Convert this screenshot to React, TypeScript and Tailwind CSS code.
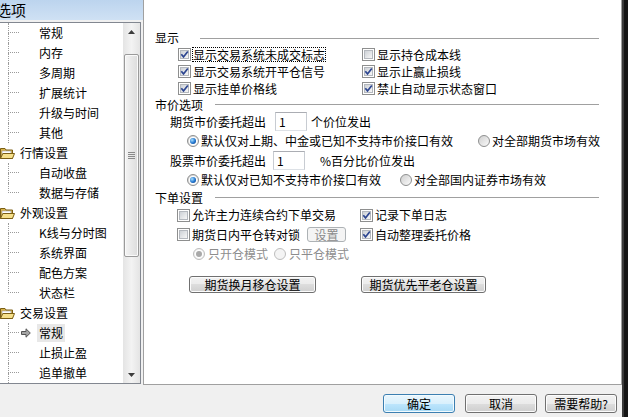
import React from 'react';

type TreeItem = { label: string; kind: 'child' | 'folder'; last?: boolean; selected?: boolean };

const tree: TreeItem[] = [
  { label: '常规', kind: 'child' },
  { label: '内存', kind: 'child' },
  { label: '多周期', kind: 'child' },
  { label: '扩展统计', kind: 'child' },
  { label: '升级与时间', kind: 'child' },
  { label: '其他', kind: 'child' },
  { label: '行情设置', kind: 'folder' },
  { label: '自动收盘', kind: 'child' },
  { label: '数据与存储', kind: 'child', last: true },
  { label: '外观设置', kind: 'folder' },
  { label: 'K线与分时图', kind: 'child' },
  { label: '系统界面', kind: 'child' },
  { label: '配色方案', kind: 'child' },
  { label: '状态栏', kind: 'child', last: true },
  { label: '交易设置', kind: 'folder' },
  { label: '常规', kind: 'child', selected: true },
  { label: '止损止盈', kind: 'child' },
  { label: '追单撤单', kind: 'child' },
];

function FolderIcon() {
  return (
    <svg width="15" height="13" viewBox="0 0 15 13" className="shrink-0">
      <path d="M0.5 1.5 H5 L6 3 H12.5 V11.5 H0.5 Z" fill="#d9b44a" stroke="#7a5e14" />
      <rect x="2" y="4" width="9" height="5" fill="#ffffff" stroke="#9a9a9a" strokeWidth="0.6" />
      <path d="M0.5 11.5 L2.8 6.5 H14.5 L12.5 11.5 Z" fill="#f6e08a" stroke="#7a5e14" />
    </svg>
  );
}

function ArrowIcon() {
  return (
    <svg width="10" height="10" viewBox="0 0 10 10" className="ml-[2px]">
      <path d="M0.5 3.5 H5 V0.8 L9.3 5 L5 9.2 V6.5 H0.5 Z" fill="#a5a5a5" stroke="#555555" strokeWidth="1" />
    </svg>
  );
}

function TreeRow({ item }: { item: TreeItem }) {
  if (item.kind === 'folder') {
    return (
      <div className="h-[20px] flex items-center">
        <FolderIcon />
        <span className="ml-[5px] leading-[14px] whitespace-nowrap">{item.label}</span>
      </div>
    );
  }
  return (
    <div className="h-[20px] flex items-stretch">
      <div className="ml-[8px] w-[11px] flex flex-col shrink-0">
        <div className="h-[10px] border-l border-b border-dotted border-[#9a9a9a]" />
        <div className={item.last ? 'flex-1' : 'flex-1 border-l border-dotted border-[#9a9a9a]'} />
      </div>
      <div className="w-[18px] flex items-center shrink-0">{item.selected && <ArrowIcon />}</div>
      <div className="flex items-center">
        <span
          className={
            item.selected
              ? 'px-[2px] h-[18px] leading-[18px] whitespace-nowrap bg-[#e8e8e8]'
              : 'px-[2px] h-[18px] leading-[18px] whitespace-nowrap'
          }
        >
          {item.label}
        </span>
      </div>
    </div>
  );
}

function ScrollArrow({ up }: { up?: boolean }) {
  return (
    <div className="h-[17px] flex items-center justify-center shrink-0">
      <svg width="7" height="4" viewBox="0 0 7 4">
        {up ? <path d="M0 4 L3.5 0 L7 4 Z" fill="#3c3c3c" /> : <path d="M0 0 L3.5 4 L7 0 Z" fill="#3c3c3c" />}
      </svg>
    </div>
  );
}

function Scrollbar() {
  return (
    <div className="w-[17px] h-full flex flex-col bg-gradient-to-r from-[#e4e4e4] via-[#f3f3f3] to-[#e4e4e4] shrink-0">
      <ScrollArrow up />
      <div className="h-[14px] shrink-0" />
      <div className="h-[203px] mx-[1px] rounded-[2px] border border-[#9a9a9a] bg-gradient-to-r from-[#f4f4f4] to-[#dcdcdc] shadow-[inset_0_0_0_1px_#fafafa] flex flex-col items-center justify-center gap-[1px] shrink-0">
        <div className="w-[7px] h-px bg-[#8a8a8a]" />
        <div className="w-[7px] h-px bg-[#8a8a8a]" />
        <div className="w-[7px] h-px bg-[#8a8a8a]" />
        <div className="w-[7px] h-px bg-[#8a8a8a]" />
      </div>
      <div className="flex-1" />
      <ScrollArrow />
    </div>
  );
}

function CheckBox({ checked }: { checked?: boolean }) {
  return (
    <span className="relative inline-block w-[13px] h-[13px] shrink-0 border border-[#8e8f8f] bg-white">
      <span className="absolute left-[1px] top-[1px] w-[9px] h-[9px] border border-[#b4b8be] bg-gradient-to-br from-[#cdd1d6] to-[#f7f7f7]" />
      {checked && (
        <svg className="absolute left-[1px] top-[1px]" width="9" height="9" viewBox="0 0 9 9">
          <path d="M1.3 4.3 L3.5 6.9 L7.8 1.4" fill="none" stroke="#2c4590" strokeWidth="1.7" />
        </svg>
      )}
    </span>
  );
}

function RadioBtn({ checked, disabled }: { checked?: boolean; disabled?: boolean }) {
  return (
    <span
      className={
        disabled
          ? 'inline-flex w-[12px] h-[12px] shrink-0 items-center justify-center rounded-full border border-[#bdbdbd] bg-[#f4f4f4]'
          : 'inline-flex w-[12px] h-[12px] shrink-0 items-center justify-center rounded-full border border-[#8e8f8f] bg-gradient-to-br from-[#cfcfcf] to-[#fbfbfb]'
      }
    >
      {checked &&
        (disabled ? (
          <span className="w-[6px] h-[6px] rounded-full bg-[#a9a9a9] shadow-[0_0_0_1px_#ffffff]" />
        ) : (
          <span className="w-[6px] h-[6px] rounded-full shadow-[0_0_0_1px_#ffffff] bg-[radial-gradient(circle_at_35%_35%,#a8e0ff_0%,#1f74cf_55%,#0a3a7e_100%)]" />
        ))}
    </span>
  );
}

function WinButton({
  children,
  className,
  variant,
}: {
  children: React.ReactNode;
  className: string;
  variant?: 'primary' | 'disabled';
}) {
  const look =
    variant === 'primary'
      ? 'border-[#3c7fb1] bg-[linear-gradient(#eaf6fd_0%,#d9f0fc_50%,#bee6fd_50%,#a7d9f5_100%)] shadow-[inset_0_0_0_1px_#f2fbff]'
      : variant === 'disabled'
        ? 'border-[#adb2b5] bg-[#f4f4f4] text-[#8a8a8a]'
        : 'border-[#707070] bg-[linear-gradient(#f2f2f2_0%,#ebebeb_50%,#dddddd_50%,#cfcfcf_100%)] shadow-[inset_0_0_0_1px_#fcfcfc]';
  return (
    <div className={`flex items-center justify-center rounded-[3px] border shrink-0 whitespace-nowrap leading-none ${look} ${className}`}>
      {children}
    </div>
  );
}

function Header({ title, gap }: { title: string; gap: string }) {
  return (
    <div className="flex items-center shrink-0 h-[16px]">
      <span className="leading-[14px] whitespace-nowrap">{title}</span>
      <div className={`flex-1 h-px bg-[#a0a0a0] mr-[22px] ${gap}`} />
    </div>
  );
}

function TextBox({ value, className }: { value: string; className: string }) {
  return (
    <div className={`h-[19px] border border-[#abadb3] border-l-[#c8ccd2] border-r-[#c8ccd2] border-b-[#dde1e6] bg-white flex items-center pl-[3px] shrink-0 ${className}`}>
      {value}
    </div>
  );
}

export default function App() {
  return (
    <div className="w-[628px] h-[417px] overflow-hidden bg-[#f0f0f0] flex text-[12px] text-black font-['Noto_Sans_CJK_SC',sans-serif]">
      {/* Left column */}
      <div className="w-[143px] h-full flex flex-col shrink-0">
        <div className="h-[20px] bg-gradient-to-b from-[#bcd4ee] to-[#cfe1f4] flex items-center overflow-hidden">
          <span className="-ml-[4px] text-[15px] leading-[20px] whitespace-nowrap">选项</span>
        </div>
        <div className="mt-[2px] w-[141px] h-[362px] border-t border-r border-b border-[#828790] bg-white flex">
          <div className="w-[123px] flex flex-col overflow-hidden">
            {tree.map((it, i) => (
              <TreeRow key={i} item={it} />
            ))}
          </div>
          <Scrollbar />
        </div>
      </div>

      {/* Middle column */}
      <div className="w-[479px] h-full flex flex-col shrink-0">
        <div className="h-[385px] bg-white border-l border-r border-b border-[#a0a0a0] flex flex-col pl-[11px] pt-[30px] shrink-0">
          <Header title="显示" gap="ml-[21px]" />
          <div className="flex flex-col pl-[23px]">
            <div className="h-[17px] flex items-center">
              <div className="w-[184px] flex items-center shrink-0">
                <CheckBox checked />
                <span className="ml-[2px] leading-[13px] whitespace-nowrap outline outline-1 outline-dotted outline-[#000000]">显示交易系统未成交标志</span>
              </div>
              <CheckBox />
              <span className="ml-[2px] whitespace-nowrap">显示持仓成本线</span>
            </div>
            <div className="h-[17px] flex items-center">
              <div className="w-[184px] flex items-center shrink-0">
                <CheckBox checked />
                <span className="ml-[2px] whitespace-nowrap">显示交易系统开平仓信号</span>
              </div>
              <CheckBox checked />
              <span className="ml-[2px] whitespace-nowrap">显示止赢止损线</span>
            </div>
            <div className="h-[17px] flex items-center">
              <div className="w-[184px] flex items-center shrink-0">
                <CheckBox checked />
                <span className="ml-[2px] whitespace-nowrap">显示挂单价格线</span>
              </div>
              <CheckBox checked />
              <span className="ml-[2px] whitespace-nowrap">禁止自动显示状态窗口</span>
            </div>
          </div>

          <div className="h-[15px] flex items-center">
            <span className="leading-[14px] whitespace-nowrap">市价选项</span>
            <div className="flex-1 h-px bg-[#a0a0a0] mr-[22px] ml-[12px]" />
          </div>

          <div className="h-[19px] flex items-center pl-[15px]">
            <span className="whitespace-nowrap">期货市价委托超出</span>
            <TextBox value="1" className="ml-[9px] w-[32px]" />
            <span className="ml-[4px] whitespace-nowrap">个价位发出</span>
          </div>
          <div className="h-[20px] flex items-center pl-[32px]">
            <RadioBtn checked />
            <span className="ml-[2px] whitespace-nowrap">默认仅对上期、中金或已知不支持市价接口有效</span>
            <span className="ml-[25px]" />
            <RadioBtn />
            <span className="ml-[2px] whitespace-nowrap">对全部期货市场有效</span>
          </div>
          <div className="h-[19px] flex items-center pl-[15px]">
            <span className="whitespace-nowrap">股票市价委托超出</span>
            <TextBox value="1" className="ml-[7px] w-[32px]" />
            <span className="ml-[15px] whitespace-nowrap">%百分比价位发出</span>
          </div>
          <div className="h-[20px] flex items-center pl-[32px]">
            <RadioBtn checked />
            <span className="ml-[2px] whitespace-nowrap">默认仅对已知不支持市价接口有效</span>
            <span className="ml-[19px]" />
            <RadioBtn />
            <span className="ml-[2px] whitespace-nowrap">对全部国内证券市场有效</span>
          </div>

          <div className="h-[15px] flex items-center">
            <span className="leading-[14px] whitespace-nowrap">下单设置</span>
            <div className="flex-1 h-px bg-[#a0a0a0] mr-[22px] ml-[12px]" />
          </div>

          <div className="h-[20px] flex items-center pl-[22px]">
            <div className="w-[183px] flex items-center shrink-0">
              <CheckBox />
              <span className="ml-[2px] whitespace-nowrap">允许主力连续合约下单交易</span>
            </div>
            <CheckBox checked />
            <span className="ml-[2px] whitespace-nowrap">记录下单日志</span>
          </div>
          <div className="h-[19px] flex items-center pl-[22px]">
            <div className="w-[183px] flex items-center shrink-0">
              <CheckBox />
              <span className="ml-[2px] whitespace-nowrap">期货日内平仓转对锁</span>
              <WinButton variant="disabled" className="ml-[7px] w-[39px] h-[15px]">
                设置
              </WinButton>
            </div>
            <CheckBox checked />
            <span className="ml-[2px] whitespace-nowrap">自动整理委托价格</span>
          </div>
          <div className="h-[20px] flex items-center pl-[38px] text-[#8d8d8d]">
            <RadioBtn checked disabled />
            <span className="ml-[3px] whitespace-nowrap">只开仓模式</span>
            <span className="ml-[6px]" />
            <RadioBtn disabled />
            <span className="ml-[3px] whitespace-nowrap">只平仓模式</span>
          </div>

          <div className="mt-[12px] flex items-center pl-[34px]">
            <WinButton className="w-[127px] h-[17px]">期货换月移仓设置</WinButton>
            <WinButton className="ml-[45px] w-[125px] h-[17px]">期货优先平老仓设置</WinButton>
          </div>
        </div>

        <div className="flex justify-end pt-[9px] pr-[5px]">
          <WinButton variant="primary" className="w-[72px] h-[19px]">
            确定
          </WinButton>
          <WinButton className="ml-[10px] w-[72px] h-[19px]">取消</WinButton>
          <WinButton className="ml-[8px] w-[72px] h-[19px]">需要帮助?</WinButton>
        </div>
      </div>

      {/* Right dark edge */}
      <div className="w-[6px] h-full bg-[#151515] border-l-2 border-[#3a3a3a] shrink-0" />
    </div>
  );
}
